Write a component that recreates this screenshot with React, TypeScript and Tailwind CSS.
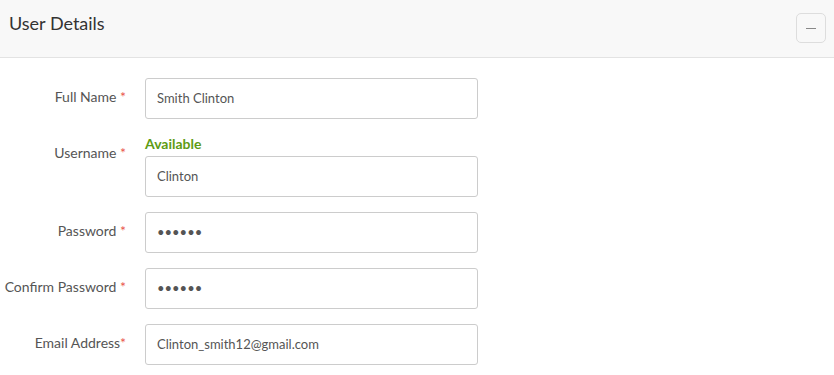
import type { ReactNode } from "react";

function Field({
  label,
  space = true,
  top,
  children,
}: {
  label: string;
  space?: boolean;
  top?: ReactNode;
  children: ReactNode;
}) {
  return (
    <div className="flex items-start">
      <label className="w-[126px] shrink-0 pt-[9px] text-right text-[14px] leading-[20px] text-[#555]">
        {label}
        {space ? " " : ""}
        <span className="text-[#e9564d]">*</span>
      </label>
      <div className="ml-[19px] w-[333px]">
        {top}
        {children}
      </div>
    </div>
  );
}

function TextInput({ value, type = "text" }: { value: string; type?: string }) {
  return (
    <input
      readOnly
      type={type}
      defaultValue={value}
      className="block h-[41px] w-full rounded-[3px] border border-[#ccc] bg-white px-[11px] pb-[2px] text-[13px] text-[#555] outline-none"
    />
  );
}

export default function App() {
  return (
    <div className="min-h-[375px] w-[834px] bg-white font-['Lato','Open_Sans',sans-serif]">
      <div className="flex h-[58px] items-start justify-between border-b border-[#e3e3e3] bg-[#f8f8f8] pl-[9px] pr-[8px]">
        <h2 className="pt-[10px] text-[18px] leading-[26px] text-[#333]">User Details</h2>
        <button className="mt-[13px] flex h-[30px] w-[30px] items-center justify-center rounded-[5px] border border-[#ddd] bg-[#f8f8f8]">
          <span className="block h-px w-[10px] bg-[#888]" />
        </button>
      </div>

      <div className="flex flex-col gap-[15px] pt-[20px]">
        <Field label="Full Name">
          <TextInput value="Smith Clinton" />
        </Field>
        <Field
          label="Username"
          top={
            <div className="h-[22px] text-[14px] font-bold leading-[20px] text-[#5e9b14]">
              Available
            </div>
          }
        >
          <TextInput value="Clinton" />
        </Field>
        <Field label="Password">
          <TextInput type="password" value="secret" />
        </Field>
        <Field label="Confirm Password">
          <TextInput type="password" value="secret" />
        </Field>
        <Field label="Email Address" space={false}>
          <TextInput value="Clinton_smith12@gmail.com" />
        </Field>
      </div>
    </div>
  );
}
